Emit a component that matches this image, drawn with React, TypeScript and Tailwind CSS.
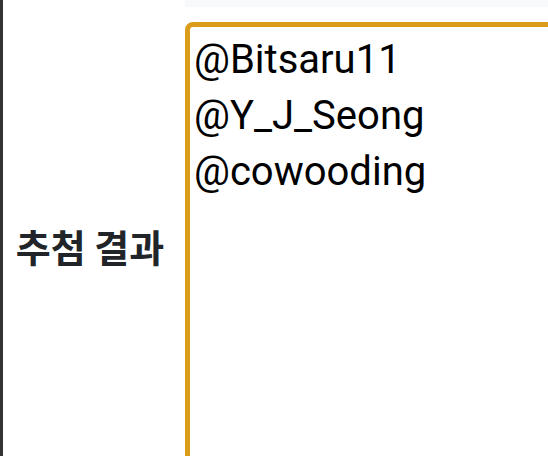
const winners = ["@Bitsaru11", "@Y_J_Seong", "@cowooding"];

export default function App() {
  return (
    <div className="h-screen overflow-hidden bg-white border-l-[3px] border-[#333333]">
      <div className="flex">
        <div className="w-[182px] shrink-0" />
        <div className="flex-1 h-[7px] bg-[#f8f9fa]" />
      </div>
      <div className="mt-[15px] flex items-center">
        <div
          className="w-[174px] shrink-0 text-center text-[38px] font-bold text-[#212529]"
          style={{ fontFamily: '"Noto Sans CJK KR", "Noto Sans", sans-serif' }}
        >
          추첨 결과
        </div>
        <div
          className="ml-2 w-[390px] shrink-0 h-[446px] border-[5px] border-[#db9b1b] rounded-l-lg px-[4px] pt-[5px] text-[40px] leading-[56px] text-black"
          style={{ fontFamily: "Roboto, sans-serif" }}
        >
          {winners.map((w) => (
            <div key={w}>{w}</div>
          ))}
        </div>
      </div>
    </div>
  );
}
